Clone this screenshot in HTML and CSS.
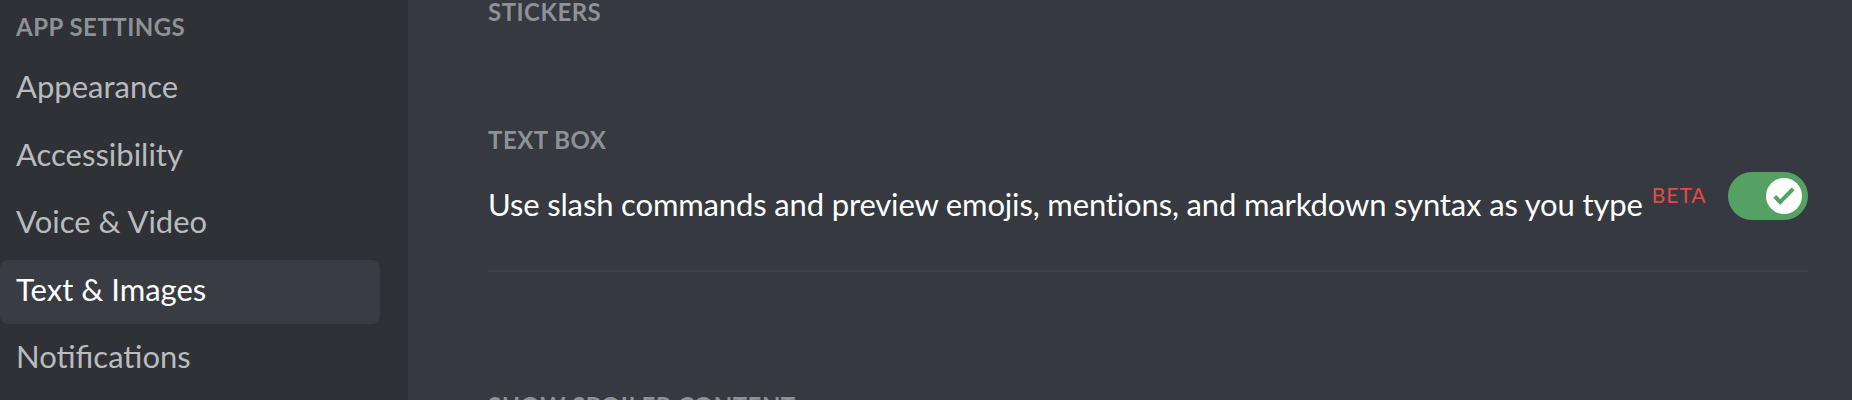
FILE: index.html
```html
<!DOCTYPE html>
<html lang="en">
<head>
<meta charset="utf-8">
<title>Text &amp; Images</title>
<link rel="stylesheet" href="styles.css">
</head>
<body>
<div class="app">
  <nav class="sidebar">
    <div class="side-header">App Settings</div>
    <div class="side-item">Appearance</div>
    <div class="side-item">Accessibility</div>
    <div class="side-item">Voice &amp; Video</div>
    <div class="side-item selected">Text &amp; Images</div>
    <div class="side-item">Notifications</div>
  </nav>
  <main class="content">
    <div class="inner">
      <h5 class="section-title first">Stickers</h5>
      <h5 class="section-title spaced">Text Box</h5>
      <div class="setting-row">
        <div class="setting-label">Use slash commands and preview emojis, mentions, and markdown syntax as you type<span class="beta">BETA</span></div>
        <div class="toggle">
          <div class="knob">
            <svg viewBox="0 0 20 20" width="36" height="36" fill="none">
              <path fill="#54a163" d="M7.89561 14.8538L6.30462 13.2629L14.3099 5.25755L15.9009 6.84854L7.89561 14.8538Z"></path>
              <path fill="#54a163" d="M4.08643 11.0903L5.67742 9.49929L9.4485 13.2704L7.85751 14.8614L4.08643 11.0903Z"></path>
            </svg>
          </div>
        </div>
      </div>
      <div class="divider"></div>
      <h5 class="section-title spoiler">Show Spoiler Content</h5>
    </div>
  </main>
</div>
</body>
</html>
```
FILE: styles.css
```css
html, body {
  margin: 0;
  padding: 0;
  height: 100%;
  overflow: hidden;
}
body {
  font-family: "Lato", "Open Sans", sans-serif;
  background: #36393f;
}
.app {
  display: flex;
  height: 100vh;
}
.sidebar {
  width: 408px;
  flex: none;
  background: #2f3136;
  padding: 11px 28px 0 0;
  box-sizing: border-box;
}
.side-header {
  padding: 0 16px;
  font-size: 24px;
  line-height: 32px;
  font-weight: 700;
  text-transform: uppercase;
  letter-spacing: 0.02em;
  color: #8e9297;
  margin-bottom: 14px;
}
.side-item {
  height: 64px;
  box-sizing: border-box;
  padding: 9px 16px 0;
  font-size: 31px;
  line-height: 40px;
  color: #b9bbbe;
  border-radius: 8px;
  margin-bottom: 3.5px;
  white-space: nowrap;
}
.side-item.selected {
  background: #393c43;
  color: #ffffff;
}
.content {
  flex: 1;
  min-width: 0;
  padding-left: 80px;
}
.inner {
  width: 1320px;
}
.section-title {
  margin: 0;
  font-size: 24px;
  line-height: 32px;
  font-weight: 700;
  text-transform: uppercase;
  letter-spacing: 0.02em;
  color: #8e9297;
}
.section-title.first {
  line-height: 24px;
}
.section-title.spaced {
  margin-top: 100px;
  margin-bottom: 16px;
}
.section-title.spoiler {
  margin-top: 118px;
}
.setting-row {
  display: flex;
  justify-content: space-between;
  align-items: flex-start;
  gap: 16px;
}
.setting-label {
  margin-top: 12px;
  font-size: 31px;
  line-height: 40px;
  letter-spacing: -0.15px;
  color: #ffffff;
  white-space: nowrap;
}
.beta {
  display: inline-block;
  vertical-align: top;
  margin-left: 9px;
  font-size: 21px;
  line-height: 21px;
  letter-spacing: 1px;
  color: #e34b4b;
}
.toggle {
  flex: none;
  width: 80px;
  height: 48px;
  border-radius: 24px;
  background: #54a163;
  display: flex;
  align-items: center;
  justify-content: flex-end;
  padding-right: 6px;
  box-sizing: border-box;
}
.knob {
  width: 36px;
  height: 36px;
  border-radius: 50%;
  background: #ffffff;
  display: flex;
}
.divider {
  margin-top: 46px;
  height: 2px;
  background: #3f4248;
}
```
